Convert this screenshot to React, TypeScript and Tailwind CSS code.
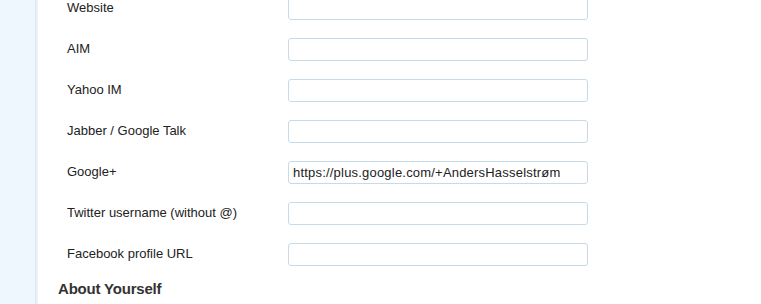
const fields: { label: string; value?: string }[] = [
  { label: "Website" },
  { label: "AIM" },
  { label: "Yahoo IM" },
  { label: "Jabber / Google Talk" },
  { label: "Google+", value: "https://plus.google.com/+AndersHasselstrøm" },
  { label: "Twitter username (without @)" },
  { label: "Facebook profile URL" },
];

export default function App() {
  return (
    <div className="flex h-[304px] w-full overflow-hidden bg-white font-['Liberation_Sans',Arial,sans-serif] text-[#222]">
      <div className="w-[35px] shrink-0 bg-[#eef6fe]" />
      <div className="w-[3px] shrink-0 bg-gradient-to-r from-[#dfe6ec] to-[#f4f6f8]" />
      <div className="flex-1 pl-[20px]">
        <div className="mt-[-3px] flex flex-col gap-[18px] pl-[9px]">
          {fields.map((f) => (
            <div key={f.label} className="flex h-[23px] items-center">
              <label className="w-[221px] shrink-0 pb-[1px] text-[13px] leading-[16px]">{f.label}</label>
              <input
                readOnly
                defaultValue={f.value ?? ""}
                className="h-[23px] w-[300px] rounded-[3px] border border-[#c6dbe8] bg-white px-[4px] text-[13px] tracking-[0.2px] text-[#222] outline-none"
              />
            </div>
          ))}
        </div>
        <h3 className="mt-[14px] text-[15px] font-bold leading-[18px] tracking-[-0.2px] text-[#333]">About Yourself</h3>
      </div>
    </div>
  );
}
